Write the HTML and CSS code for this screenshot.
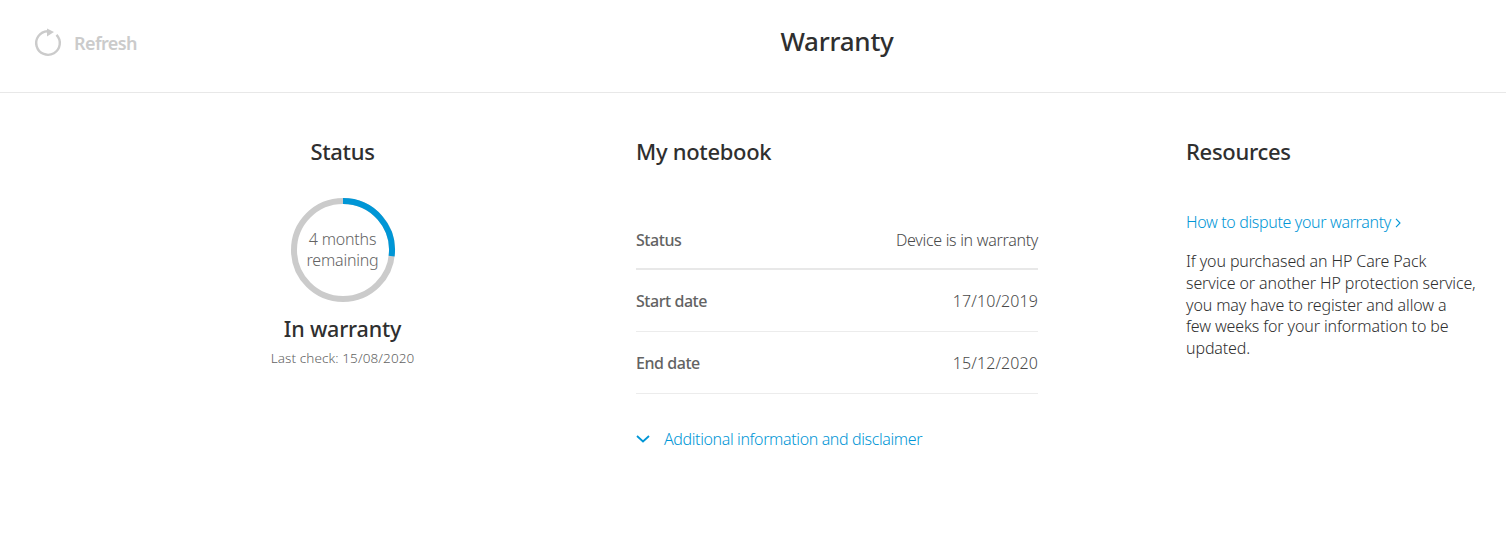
FILE: index.html
```html
<!DOCTYPE html>
<html lang="en">
<head>
<meta charset="utf-8">
<title>Warranty</title>
<link rel="stylesheet" href="styles.css">
</head>
<body>
<header class="topbar">
  <button class="refresh" type="button">
    <svg class="refresh-icon" width="28" height="28" viewBox="0 0 28 28" aria-hidden="true">
      <path d="M12.5 2.2 A11.8 11.8 0 1 0 21.5 5.8" fill="none" stroke="#cbcbcb" stroke-width="2.4"/>
      <path d="M12 -0.6 L19 3 L12 7.4 Z" fill="#cbcbcb"/>
    </svg>
    <span>Refresh</span>
  </button>
  <h1 class="page-title">Warranty</h1>
</header>
<main class="content">
  <section class="status">
    <h2 class="heading">Status</h2>
    <div class="ring">
      <svg width="106" height="106" viewBox="0 0 106 106" aria-hidden="true">
        <circle cx="53" cy="53" r="49" fill="none" stroke="#cbcbcb" stroke-width="6"/>
        <path d="M53 4 A49 49 0 0 1 101.6 59.2" fill="none" stroke="#0096d6" stroke-width="6"/>
      </svg>
      <div class="ring-label">4 months<br>remaining</div>
    </div>
    <div class="state">In warranty</div>
    <div class="last-check">Last check: 15/08/2020</div>
  </section>
  <section class="notebook">
    <h2 class="heading">My notebook</h2>
    <dl class="rows">
      <div class="row row-strong"><dt>Status</dt><dd>Device is in warranty</dd></div>
      <div class="row"><dt>Start date</dt><dd class="date">17/10/2019</dd></div>
      <div class="row"><dt>End date</dt><dd class="date">15/12/2020</dd></div>
    </dl>
    <a class="disclosure" href="#">
      <svg width="14" height="8" viewBox="0 0 14 8" aria-hidden="true"><path d="M1 1 L7 6.5 L13 1" fill="none" stroke="#0096d6" stroke-width="1.8"/></svg>
      <span>Additional information and disclaimer</span>
    </a>
  </section>
  <section class="resources">
    <h2 class="heading">Resources</h2>
    <a class="link" href="#">How to dispute your warranty
      <svg width="6" height="10" viewBox="0 0 6 10" aria-hidden="true"><path d="M1 .8 L5 5 L1 9.2" fill="none" stroke="#0096d6" stroke-width="1.1"/></svg>
    </a>
    <p class="note">If you purchased an HP Care Pack<br>service or another HP protection service,<br>you may have to register and allow a<br>few weeks for your information to be<br>updated.</p>
  </section>
</main>
</body>
</html>
```
FILE: styles.css
```css
* { box-sizing: border-box; }
html, body { margin: 0; padding: 0; }
body {
  width: 1506px;
  height: 543px;
  overflow: hidden;
  background: #fff;
  color: #2f2f2f;
  font-family: "Noto Sans", "Open Sans", sans-serif;
  font-weight: 300;
}
.topbar {
  position: relative;
  height: 93px;
  border-bottom: 1px solid #e8e8e8;
  display: flex;
  align-items: center;
  justify-content: center;
}
.refresh {
  position: absolute;
  left: 35px;
  top: 29px;
  display: flex;
  align-items: center;
  gap: 11px;
  padding: 0;
  border: 0;
  background: none;
  color: #cbcbcb;
  font: 600 18px/28px "Noto Sans", sans-serif;
  letter-spacing: -0.6px;
}
.refresh-icon { overflow: visible; }
.page-title {
  margin: 0 0 10px 168px;
  font-size: 26px;
  line-height: 34px;
  font-weight: 500;
  letter-spacing: -0.25px;
  color: #2f2f2f;
}
.content {
  display: grid;
  grid-template-columns: 636px 550px 320px;
  padding-top: 42px;
}
.heading {
  margin: 0;
  font-size: 22px;
  line-height: 33px;
  font-weight: 500;
  letter-spacing: -0.3px;
  color: #2f2f2f;
}
.status {
  width: 685px;
  margin-right: -49px;
  display: flex;
  flex-direction: column;
  align-items: center;
}
.ring {
  position: relative;
  width: 106px;
  height: 106px;
  margin-top: 29px;
}
.ring svg { display: block; }
.ring-label {
  position: absolute;
  inset: 0;
  display: flex;
  align-items: center;
  justify-content: center;
  text-align: center;
  font-size: 16px;
  line-height: 21px;
  letter-spacing: -0.2px;
  color: #636363;
}
.state {
  margin-top: 11px;
  font-size: 21.5px;
  line-height: 30px;
  font-weight: 500;
  letter-spacing: -0.2px;
}
.last-check {
  margin-top: 4px;
  font-size: 13.5px;
  line-height: 20px;
  letter-spacing: 0.1px;
  color: #636363;
}
.rows {
  width: 402px;
  margin: 40px 0 0;
}
.row {
  display: flex;
  justify-content: space-between;
  align-items: center;
  height: 62px;
  border-bottom: 1px solid #ececec;
  font-size: 16px;
  color: #4a4a4a;
}
.row-strong {
  height: 62px;
  padding-top: 4px;
  border-bottom: 2px solid #e8e8e8;
}
.row dt { font-weight: 500; color: #636363; letter-spacing: -0.45px; }
.row dd { margin: 0; letter-spacing: -0.3px; }
.row dd.date { letter-spacing: 0.1px; }
.disclosure {
  display: flex;
  align-items: center;
  gap: 14px;
  margin-top: 34px;
  font-size: 16px;
  line-height: 22px;
  letter-spacing: -0.38px;
  color: #0096d6;
  text-decoration: none;
}
.link {
  display: block;
  margin-top: 43px;
  font-size: 16px;
  line-height: 22px;
  letter-spacing: -0.35px;
  color: #0096d6;
  text-decoration: none;
}
.note {
  margin: 18px 0 0;
  font-size: 16px;
  line-height: 21.8px;
  letter-spacing: -0.12px;
  color: #2f2f2f;
}
```
